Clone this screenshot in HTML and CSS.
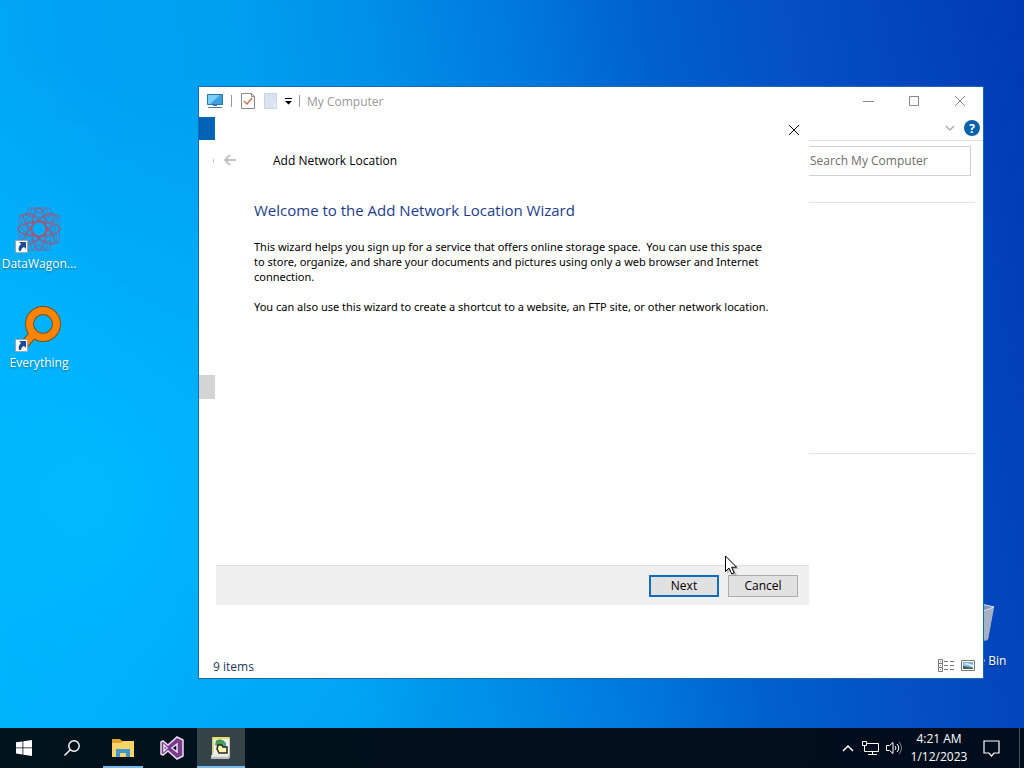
FILE: index.html
```html
<!DOCTYPE html>
<html lang="en">
<head>
    <meta charset="UTF-8">
    <meta name="viewport" content="width=device-width, initial-scale=1.0">
    <title>My Computer</title>
    <link rel="stylesheet" href="styles.css">
</head>
<body>
    <main class="desktop">
        <a class="shortcut shortcut-datawagon" href="#">
            <svg class="shortcut-icon" viewBox="0 0 48 48" fill="none">
                <g stroke="#6675b0" stroke-width="1">
                    <rect x="12" y="12" width="24" height="24"/>
                    <rect x="12" y="12" width="24" height="24" transform="rotate(45 24 24)"/>
                    <path d="M17 3l7 5 7-5 2 8 9-1-1 9 5 5-5 5 1 9-9-1-2 8-7-5-7 5-2-8-9 1 1-9-5-5 5-5-1-9 9 1z"/>
                    <path d="M13 3h22v7h9v28h-9v7H13v-7H4V10h9z"/>
                </g>
                <g stroke="#8d6088" stroke-width="1.300">
                    <ellipse cx="24" cy="24" rx="7" ry="21"/>
                    <ellipse cx="24" cy="24" rx="7" ry="21" transform="rotate(45 24 24)"/>
                    <ellipse cx="24" cy="24" rx="7" ry="21" transform="rotate(90 24 24)"/>
                    <ellipse cx="24" cy="24" rx="7" ry="21" transform="rotate(135 24 24)"/>
                </g>
                <circle cx="24" cy="24" r="8" stroke="#a8557a" stroke-width="2" stroke-dasharray="4 2"/>
                <path fill="#fff" stroke="#9aa7b5" d="M.5 35.500h12v12H.5z"/>
                <path fill="#1f4a94" d="M4 37h7v7l-2-2c-2 1-3 2-3 4H4c-1-3 0-5 2-7z"/>
            </svg>
            <span>DataWagon...</span>
        </a>
        <a class="shortcut shortcut-everything" href="#">
            <svg class="shortcut-icon" viewBox="0 0 48 48">
                <path d="M20 28L9 41" stroke="#77501c" stroke-width="9"/>
                <circle cx="28" cy="20" r="13.500" fill="none" stroke="#77501c" stroke-width="9"/>
                <path d="M21 27L9 41" stroke="#ff8500" stroke-width="7"/>
                <circle cx="28" cy="20" r="13.500" fill="none" stroke="#ff8500" stroke-width="7"/>
                <path fill="#fff" stroke="#9aa7b5" d="M.5 35.500h12v12H.5z"/>
                <path fill="#1f4a94" d="M4 37h7v7l-2-2c-2 1-3 2-3 4H4c-1-3 0-5 2-7z"/>
            </svg>
            <span>Everything</span>
        </a>
        <a class="shortcut shortcut-bin" href="#">
            <svg class="shortcut-icon" viewBox="0 0 48 48">
                <path fill="#8397ba" d="M6 6l20-5 17 4-6 33-14 4-11-4z"/>
                <path fill="#a5b1c4" d="M30 11l13-6-6 32-7 2z"/>
                <path fill="none" stroke="#d9e3ef" d="M6 6l20-5 17 4-13 5z"/>
            </svg>
            <span>Recycle Bin</span>
        </a>

        <section class="explorer">
            <header class="title-bar">
                <svg class="icon-pc" viewBox="0 0 18 16">
                    <path fill="#3c9fdf" stroke="#2277ae" d="M1.500 1.500h15v10h-15z"/>
                    <path fill="#7bd0fa" d="M2 2h12L4 11H2z"/>
                    <path fill="#547c96" d="M7 12h4v1H7zM2 14h14v1H2z"/>
                </svg>
                <span class="divider"></span>
                <svg class="icon-page icon-properties" viewBox="0 0 14 16">
                    <path fill="#fff" stroke="#8b8b8b" d="M.5.5h10l3 3v12H.5z"/>
                    <path fill="none" stroke="#8b8b8b" d="M10.500.5v3h3"/>
                    <path fill="none" stroke="#d0744a" stroke-width="1.500" d="M3 8l3 3 5-6"/>
                </svg>
                <svg class="icon-page" viewBox="0 0 14 16">
                    <path fill="#d9e3f1" stroke="#c9d5e6" d="M1.500.5h12v15h-12z"/>
                    <path fill="#e8eef6" d="M11 10h2v5h-2z"/>
                </svg>
                <svg class="icon-menu" viewBox="0 0 8 8">
                    <path d="M1 1h7v1H1zM1 4h7L4.500 7.500z"/>
                </svg>
                <span class="divider"></span>
                <h1 class="window-title">My Computer</h1>
                <div class="window-controls">
                    <button type="button" aria-label="Minimize">
                        <svg viewBox="0 0 12 12"><path d="M1 6.500h11"/></svg>
                    </button>
                    <button type="button" aria-label="Maximize">
                        <svg viewBox="0 0 12 12"><path d="M1.500 1.500h9v9h-9z"/></svg>
                    </button>
                    <button type="button" aria-label="Close">
                        <svg viewBox="0 0 12 12"><path d="M1 1l10 10M11 1L1 11"/></svg>
                    </button>
                </div>
            </header>
            <div class="ribbon">
                <div class="file-tab"></div>
                <div class="ribbon-tools">
                    <svg class="icon-chevron" viewBox="0 0 10 10"><path fill="none" stroke="#b0b0b0" stroke-width="1.500" d="M1 3l4 4 4-4"/></svg>
                    <button class="help" type="button" aria-label="Help">?</button>
                </div>
            </div>
            <div class="address-row">
                <span class="nav-arrow"></span>
                <input class="search" type="text" placeholder="Search My Computer" aria-label="Search My Computer">
            </div>
            <div class="explorer-body">
                <div class="nav-pane">
                    <div class="nav-selected"></div>
                </div>
                <div class="groups">
                    <div class="group group-head"></div>
                    <div class="group"></div>
                </div>
            </div>
            <footer class="status-bar">
                <span>9 items</span>
                <svg class="icon-view" viewBox="0 0 16 14">
                    <path fill="none" stroke="#777" d="M.5.5h4v4h-4zM.5 4.500h4v4h-4zM.5 8.500h4v4h-4zM2 2.500h1M2 6.500h1M2 10.500h1M6 2.500h4M12 2.500h4M6 6.500h4M12 6.500h4M6 10.500h4M12 10.500h4"/>
                </svg>
                <svg class="icon-thumbs" viewBox="0 0 14 12">
                    <path fill="#fff" stroke="#7a7a7a" d="M.5.5h13v10H.5z"/>
                    <path fill="#7cb0e0" d="M2 2h10v7H2z"/>
                    <path fill="#e8f2fa" d="M2 4l5 1 5 2v-2l-6-2z"/>
                    <path fill="#3e6157" d="M2 6l4 1 6 1v1H2z"/>
                </svg>
            </footer>

            <!-- wizard over the explorer window -->
            <section class="wizard" role="dialog" aria-labelledby="wizard-title">
                <div class="wizard-close-row">
                    <button class="wizard-close" type="button" aria-label="Close">
                        <svg viewBox="0 0 12 12"><path stroke="#000" d="M1 1l10 10M11 1L1 11"/></svg>
                    </button>
                </div>
                <header class="wizard-header">
                    <button class="back" type="button" aria-label="Back" disabled>
                        <svg viewBox="0 0 14 12"><path fill="none" stroke="#c4c4c4" stroke-width="2" d="M13 6H2M7 1L2 6l5 5"/></svg>
                    </button>
                    <h2 id="wizard-title">Add Network Location</h2>
                </header>
                <div class="wizard-content">
                    <h3>Welcome to the Add Network Location Wizard</h3>
                    <p>This wizard helps you sign up for a service that offers online storage space.&nbsp; You can use this space<br>to store, organize, and share your documents and pictures using only a web browser and Internet<br>connection.</p>
                    <p>You can also use this wizard to create a shortcut to a website, an FTP site, or other network location.</p>
                </div>
                <footer class="wizard-footer">
                    <button class="btn btn-default" type="button">Next</button>
                    <button class="btn" type="button">Cancel</button>
                </footer>
            </section>
        </section>

        <svg class="cursor" viewBox="0 0 14 21">
            <path fill="#888" opacity=".5" d="M2 2v17l4-4 3 6 3-1-3-6h5z"/>
            <path fill="#fff" stroke="#000" d="M.5 1v15.500l3.500-3.500 2.800 6 2.400-1-2.600-5.800h5z"/>
        </svg>
    </main>

    <nav class="taskbar">
        <button class="task" type="button" aria-label="Start">
            <svg width="16" height="16" viewBox="0 0 16 16"><path fill="#fff" d="M0 2.300l6.500-.9v6.100H0zM7.300 1.300L16 0v7.500H7.300zM0 8.300h6.500v6.200L0 13.600zM7.300 8.300H16V16l-8.700-1.300z"/></svg>
        </button>
        <button class="task" type="button" aria-label="Search">
            <svg width="16" height="16" viewBox="0 0 16 16" fill="none" stroke="#fff" stroke-width="1.400"><circle cx="10" cy="6" r="5.200"/><path d="M6.300 9.700L.5 15.500"/></svg>
        </button>
        <div class="apps">
            <button class="task task-open" type="button" aria-label="File Explorer">
                <svg width="22" height="18" viewBox="0 0 22 18">
                    <path fill="#dfa62b" d="M0 0h8l2 2h12v4H0z"/>
                    <path fill="#fbd468" d="M0 4h9l2-2h11v16H0z"/>
                    <path fill="#3e97cf" d="M4 10h14v8h-4v-4H8v4H4z"/>
                </svg>
            </button>
            <button class="task" type="button" aria-label="Visual Studio">
                <svg width="24" height="24" viewBox="0 0 24 24">
                    <path fill="#7a3a90" stroke="#e9dff0" stroke-width="1.500" fill-rule="evenodd" d="M17 1l6 3v16l-6 3-9-8-5 4-2-1V6l2-1 5 4zM17 8l-5 4 5 4zM4 9v6l3-3z"/>
                </svg>
            </button>
            <button class="task task-open task-active" type="button" aria-label="Add Network Location">
                <svg width="20" height="24" viewBox="0 0 20 24">
                    <path fill="#f1f1e6" stroke="#c9cab4" d="M1.500 1.500h17v20h-17z"/>
                    <path fill="#e9dc5c" d="M2 1h16v2H2zM2 3h1v14H2z"/>
                    <path fill="#b9bdbd" d="M0 19h18v4H0z"/>
                    <path fill="#e4e6e4" d="M1 19h16v2H1z"/>
                    <path fill="#4b9dad" d="M5 4h7l3 3v4H8l-4-2z"/>
                    <path fill="#4b9b45" d="M5 5l4-2 4 3-3 3-4 1z"/>
                    <path fill="#fbf3a9" stroke="#222a1c" stroke-width="1.500" d="M7 9h4l1 2h4v6H8l-2-4z"/>
                </svg>
            </button>
        </div>
        <div class="tray">
            <svg class="tray-arrow" viewBox="0 0 12 8" fill="none" stroke="#fff" stroke-width="1.500"><path d="M1 7l5-5 5 5"/></svg>
            <svg width="17" height="14" viewBox="0 0 17 14" fill="none" stroke="#fff"><path d="M5 2.500h11.500v8H5.500M10.500 10.500v3M6 13.500h9M.5.5h4v4h-4zM2.500 4.500v6M2.500 10.500h3"/></svg>
            <svg width="17" height="14" viewBox="0 0 17 14" fill="none" stroke="#fff"><path d="M.5 4.500h3l3.500-3v11l-3.500-3h-3zM9 5q2 2 0 4M11 3q3.500 4 0 8"/><path stroke="#78838c" d="M13 1q5 6 0 12"/></svg>
            <time class="clock">4:21 AM<br>1/12/2023</time>
            <svg width="17" height="17" viewBox="0 0 17 17" fill="none" stroke="#fff" stroke-width="1.200"><path d="M1 1h15v12h-5l-2.500 3L6 13H1z"/></svg>
        </div>
        <div class="show-desktop"></div>
    </nav>
</body>
</html>
```

FILE: styles.css
```css
body, h1, h2, h3, p {
    margin: 0;
    padding: 0;
}

* {
    box-sizing: border-box;
}

body {
    display: flex;
    flex-direction: column;
    height: 100vh;
    overflow: hidden;
    font-family: "Open Sans", "Noto Sans", sans-serif;
    font-size: 12px;
    line-height: 15px;
    color: #000;
}

svg {
    display: block;
    flex: none;
}

button {
    font: inherit;
    padding: 0;
    border: 0;
    background: none;
}

h1, h2, h3 {
    font-size: 12px;
    font-weight: normal;
}

.desktop {
    position: relative;
    flex: 1;
    background:
        radial-gradient(ellipse 40% 60% at 8% 68%, #00b9ff 0%, rgba(0, 185, 255, 0) 100%),
        linear-gradient(80deg, #00b0fa 0%, #00a0f4 18%, #00a0f0 31%, #008fe9 43%, #0078dc 56%, #0060cc 67%, #0450c4 79%, #003ab4 100%);
}

/* desktop icons */
.shortcut {
    position: absolute;
    display: flex;
    flex-direction: column;
    align-items: center;
    gap: 3px;
    width: 76px;
    color: #fff;
    text-decoration: none;
    white-space: nowrap;
    text-shadow: 0 1px 2px rgba(0, 0, 0, 0.4);
}

.shortcut-icon {
    width: 48px;
    height: 48px;
}

.shortcut-datawagon {
    left: 1px;
    top: 205px;
}

.shortcut-everything {
    left: 1px;
    top: 304px;
}

.shortcut-bin {
    right: 11px;
    bottom: 60px;
}

/* explorer window */
.explorer {
    position: absolute;
    left: 198px;
    right: 40px;
    top: 86px;
    bottom: 49px;
    display: flex;
    flex-direction: column;
    background: #fff;
    border: 1px solid #1a68ad;
}

.title-bar {
    display: flex;
    align-items: center;
    gap: 7px;
    height: 30px;
    padding: 0 0 2px 7px;
    color: #999;
}

.icon-pc {
    width: 18px;
    height: 16px;
}

.icon-page {
    width: 14px;
    height: 16px;
}

.icon-properties {
    margin: 0 1px 0 2px;
}

.icon-menu {
    width: 8px;
    height: 8px;
}

.divider {
    width: 1px;
    height: 12px;
    background: #999;
}

.window-controls {
    display: flex;
    margin-left: auto;
}

.window-controls button {
    display: flex;
    align-items: center;
    justify-content: center;
    width: 46px;
    height: 28px;
}

.window-controls svg {
    width: 12px;
    height: 12px;
    fill: none;
    stroke: #888;
}

.ribbon {
    display: flex;
    height: 24px;
}

.file-tab {
    width: 16px;
    height: 23px;
    margin-right: 1px;
    background: #0063b5;
}

.ribbon-tools {
    display: flex;
    flex: 1;
    align-items: center;
    justify-content: flex-end;
    gap: 9px;
    padding: 0 3px 1px 0;
    border-bottom: 1px solid #ddd;
}

.icon-chevron {
    width: 10px;
    height: 10px;
}

.help {
    width: 16px;
    height: 16px;
    border-radius: 50%;
    background: #0a62ad;
    color: #fff;
    font-weight: bold;
}

.address-row {
    display: flex;
    align-items: center;
    justify-content: space-between;
    padding: 5px 12px 5px 14px;
}

.nav-arrow {
    width: 1px;
    height: 4px;
    background: #c4c4c4;
}

.search {
    width: 170px;
    height: 30px;
    padding: 0 8px 1px;
    border: 1px solid #d0d0d0;
    border-radius: 0;
    font: inherit;
}

.search::placeholder {
    color: #6d6d6d;
    opacity: 1;
}

.explorer-body {
    display: flex;
    flex: 1;
}

.nav-pane {
    width: 17px;
    padding-top: 194px;
}

.nav-selected {
    width: 16px;
    height: 24px;
    background: #d4d4d4;
}

.groups {
    flex: 1;
    padding-right: 8px;
}

.group {
    height: 251px;
    border-bottom: 1px solid #e2e2e2;
}

.group-head {
    height: 22px;
}

.status-bar {
    display: flex;
    align-items: center;
    gap: 7px;
    height: 24px;
    padding: 0 8px 0 14px;
    color: #1e395b;
}

.status-bar span {
    flex: 1;
}

.icon-view {
    width: 16px;
    height: 14px;
}

.icon-thumbs {
    width: 14px;
    height: 12px;
}

/* wizard */
.wizard {
    position: absolute;
    left: 17px;
    right: 174px;
    top: 31px;
    bottom: 73px;
    display: flex;
    flex-direction: column;
    background: #fff;
}

.wizard-close-row {
    display: flex;
    justify-content: flex-end;
    height: 24px;
    padding-right: 9px;
}

.wizard-close {
    display: flex;
    align-items: center;
}

.wizard-close svg {
    width: 12px;
    height: 12px;
}

.wizard-header {
    display: flex;
    align-items: center;
    gap: 36px;
    height: 36px;
    padding-left: 7px;
}

.back svg {
    width: 14px;
    height: 12px;
}

.wizard-content {
    flex: 1;
    padding: 21px 24px 0 38px;
}

.wizard-content h3 {
    margin-bottom: 18px;
    font-size: 15px;
    line-height: 22px;
    color: #1b3c8c;
}

.wizard-content p {
    margin-bottom: 15px;
    font-family: "Noto Sans", "Open Sans", sans-serif;
    font-size: 11px;
    white-space: nowrap;
}

.wizard-footer {
    display: flex;
    align-items: center;
    justify-content: flex-end;
    gap: 9px;
    height: 40px;
    padding-right: 11px;
    background: #f0f0f0;
    border-top: 1px solid #dfdfdf;
}

.btn {
    width: 70px;
    height: 22px;
    border: 1px solid #adadad;
    background: #e1e1e1;
}

.btn-default {
    border: 2px solid #0f6fbe;
}

.cursor {
    position: absolute;
    left: 725px;
    top: 555px;
    width: 14px;
    height: 21px;
}

/* taskbar */
.taskbar {
    display: flex;
    height: 40px;
    background: linear-gradient(90deg, #01131c, #010c1c);
    color: #fff;
}

.apps {
    display: flex;
    gap: 1px;
    margin-left: 3px;
}

.task {
    display: flex;
    align-items: center;
    justify-content: center;
    width: 48px;
}

.task-open {
    position: relative;
}

.task-open::after {
    content: "";
    position: absolute;
    left: 4px;
    right: 4px;
    bottom: 0;
    height: 2px;
    background: #76b9ed;
}

.task-active {
    background: #344449;
}

.task-active::after {
    left: 0;
    right: 0;
}

.tray {
    display: flex;
    align-items: center;
    gap: 7px;
    margin-left: auto;
    padding-right: 19px;
}

.tray-arrow {
    width: 12px;
    height: 8px;
    margin-right: 1px;
}

.clock {
    width: 58px;
    margin-right: 8px;
    line-height: 18px;
    text-align: center;
}

.show-desktop {
    width: 5px;
    border-left: 1px solid #4a545e;
}
```
